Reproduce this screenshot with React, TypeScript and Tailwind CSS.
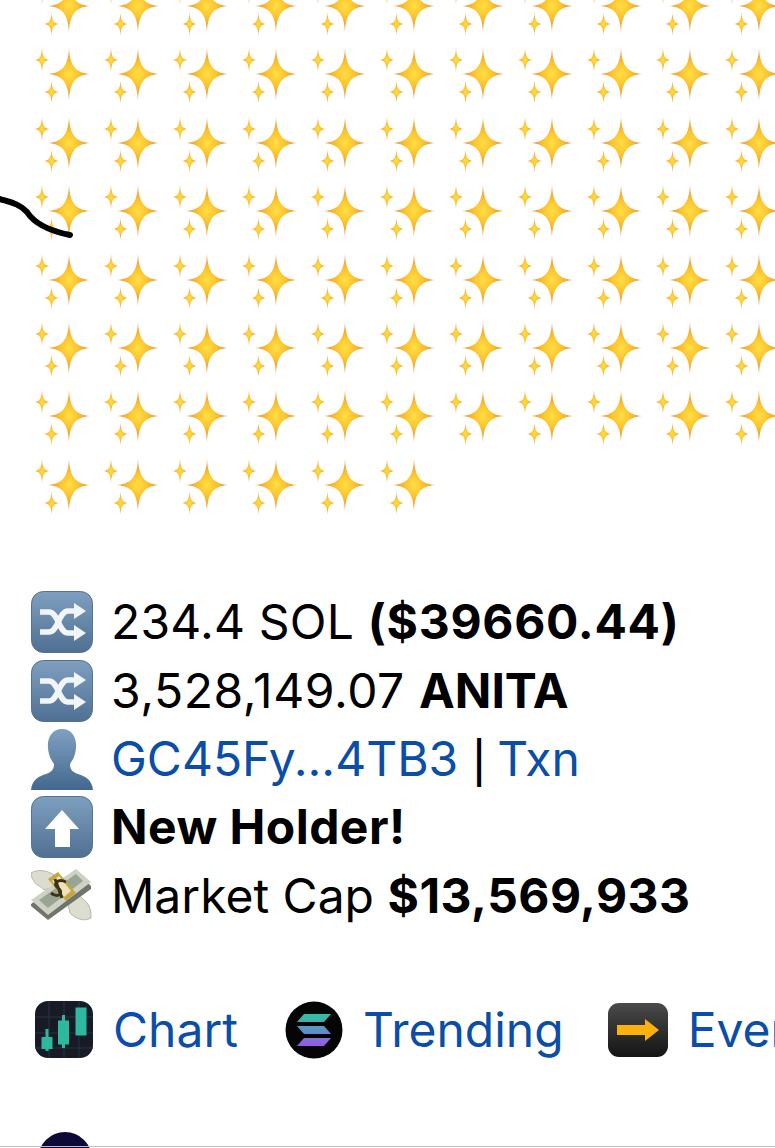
import React from "react";

function star(cx: number, cy: number, rx: number, ry: number) {
  const a = 0.04;
  const b = 0.32;
  return [
    `M${cx} ${cy - ry}`,
    `C${cx + a * rx} ${cy - b * ry} ${cx + b * rx} ${cy - a * ry} ${cx + rx} ${cy}`,
    `C${cx + b * rx} ${cy + a * ry} ${cx + a * rx} ${cy + b * ry} ${cx} ${cy + ry}`,
    `C${cx - a * rx} ${cy + b * ry} ${cx - b * rx} ${cy + a * ry} ${cx - rx} ${cy}`,
    `C${cx - b * rx} ${cy - a * ry} ${cx - a * rx} ${cy - b * ry} ${cx} ${cy - ry}Z`,
  ].join(" ");
}

const bigStar = star(35, 27, 21, 26);
const smallA = star(8, 13, 7.5, 12);
const smallB = star(17.5, 45, 7.5, 11.5);

function Sparkles() {
  return (
    <svg viewBox="0 0 60 60" className="w-[60px] h-[60px] block blur-[0.4px]">
      <path fill="url(#spk)" d={bigStar} />
      <path fill="url(#spk)" d={smallA} />
      <path fill="url(#spk)" d={smallB} />
    </svg>
  );
}

function Shuffle() {
  return (
    <svg viewBox="0 0 62 62" className="w-[62px] h-[62px] shrink-0">
      <rect x="0.5" y="0.5" width="61" height="61" rx="12" fill="url(#blueTile)" stroke="#54718f" />
      <g fill="none" stroke="#f2f5f8" strokeWidth="5.5">
        <path d="M9 21 H18 C27 21 28 42 37 42 H44" />
        <path d="M9 41 H18 C27 41 28 20 37 20 H44" />
      </g>
      <path fill="#f2f5f8" d="M43 12 L55 20 L43 28Z M43 34 L55 42 L43 50Z" />
    </svg>
  );
}

function Person() {
  return (
    <svg viewBox="0 0 62 62" className="w-[62px] h-[62px] shrink-0">
      <defs>
        <linearGradient id="personG" x1="0" y1="0" x2="0" y2="1">
          <stop offset="0%" stopColor="#7fa0c2" />
          <stop offset="100%" stopColor="#43688d" />
        </linearGradient>
      </defs>
      <path fill="url(#personG)" d="M31 1 C41 1 46 10 45 20 C44.500 28 41 33 39 36 C39 41 41 44 47 46 C55 48.500 61 52 62 62 H0 C1 52 7 48.500 15 46 C21 44 23 41 23 36 C21 33 17.500 28 17 20 C16 10 21 1 31 1Z" />
    </svg>
  );
}

function UpArrow() {
  return (
    <svg viewBox="0 0 62 62" className="w-[62px] h-[62px] shrink-0">
      <rect x="0.5" y="0.5" width="61" height="61" rx="12" fill="url(#blueTile)" stroke="#54718f" />
      <path fill="#ffffff" d="M31 14 L48 33 H39 V51 H24 V33 H14Z" />
    </svg>
  );
}

function MoneyWings() {
  return (
    <svg viewBox="2 0 62 56" className="w-[62px] h-[56px] shrink-0 -mt-[4px] blur-[0.3px]">
      <g fill="#dcdccf" stroke="#a9aa9a" strokeWidth="0.8">
        <path d="M2 7 C8 3 18 4 25 9 L27 20 L15 24 C12 20 6 19 5 15 C3 13 2 10 2 7Z" />
        <path d="M62 52 C55 56 47 53 41 47 L38 34 L50 29 C53 33 58 35 60 40 C62 44 62 48 62 52Z" />
      </g>
      <path fill="#6f7568" d="M2 38 L47 6 L62 20 L62 23 L19 54 L2 40Z" />
      <path fill="#cdd2c4" d="M2 34 L47 3 L62 16 L19 49 Z" />
      <path fill="#98a592" d="M10 34 L47 8 L54 15 L19 42 Z" />
      <path fill="#c7a63f" d="M19 13 L29 6 L47 27 L37 35 Z" />
      <path fill="#ece3bb" d="M23 15 L30 10 L42 25 L35 31 Z" />
      <path fill="none" stroke="#3d3214" strokeWidth="3" d="M37 16 C29 12 23 18 29 22 C35 26 30 33 22 27 M26 13 L33 32" />
    </svg>
  );
}

function ChartIcon() {
  return (
    <svg viewBox="0 0 58 58" className="w-[58px] h-[58px] shrink-0 blur-[0.3px]">
      <rect width="58" height="57" rx="13" fill="#161b26" />
      <g stroke="#2a3340" strokeWidth="1">
        <path d="M0 16 H58 M0 32 H58 M0 47 H58 M14 0 V57 M29 0 V57 M44 0 V57" />
      </g>
      <g fill="#2fb8a0">
        <rect x="6.500" y="36" width="11" height="12" />
        <rect x="10.500" y="28" width="3" height="22" />
        <rect x="23" y="19.500" width="11" height="24" />
        <rect x="27" y="14" width="3" height="33" />
        <rect x="40.500" y="6.500" width="11" height="28" />
      </g>
    </svg>
  );
}

function SolanaIcon() {
  return (
    <svg viewBox="0 0 58 58" className="w-[58px] h-[58px] shrink-0 blur-[0.3px]">
      <defs>
        <linearGradient id="solG" x1="0" y1="0" x2="0" y2="1">
          <stop offset="0%" stopColor="#2fc2a0" />
          <stop offset="50%" stopColor="#5b93c4" />
          <stop offset="100%" stopColor="#9a55e8" />
        </linearGradient>
      </defs>
      <circle cx="29" cy="29" r="28.500" fill="#050505" />
      <path fill="url(#solG)" d="M19 13 H46 L39 21 H12Z M12 25 H39 L46 33 H19Z M19 37 H46 L39 45 H12Z" />
    </svg>
  );
}

function ArrowIcon() {
  return (
    <svg viewBox="0 0 60 54" className="w-[60px] h-[54px] shrink-0 blur-[0.3px]">
      <defs>
        <linearGradient id="arrTile" x1="0" y1="0" x2="0" y2="1">
          <stop offset="0%" stopColor="#4a4a4a" />
          <stop offset="100%" stopColor="#141414" />
        </linearGradient>
      </defs>
      <rect width="60" height="54" rx="11" fill="url(#arrTile)" />
      <path fill="#fbb00f" d="M9 22 H37 V16 L51 27 L37 38 V32 H9Z" />
    </svg>
  );
}

function Row({ icon, children }: { icon: React.ReactNode; children: React.ReactNode }) {
  return (
    <div className="flex items-center h-[68.4px] whitespace-nowrap">
      <div className="w-[80px] shrink-0 flex items-center">{icon}</div>
      <div>{children}</div>
    </div>
  );
}

export default function App() {
  const counts = [11, 11, 11, 11, 11, 11, 11, 6];
  return (
    <div
      className="relative w-[775px] h-[1148px] overflow-hidden bg-white text-black text-[48px] leading-none"
      style={{ fontFamily: "Inter, 'Liberation Sans', sans-serif" }}
    >
      <svg width="0" height="0" className="absolute">
        <defs>
          <radialGradient id="spk" cx="50%" cy="50%" r="50%">
            <stop offset="0%" stopColor="#ffdf45" />
            <stop offset="40%" stopColor="#fdc52f" />
            <stop offset="100%" stopColor="#ee8a30" />
          </radialGradient>
          <linearGradient id="blueTile" x1="0" y1="0" x2="0" y2="1">
            <stop offset="0%" stopColor="#7e9fc0" />
            <stop offset="100%" stopColor="#4f7092" />
          </linearGradient>
        </defs>
      </svg>

      <div className="-mt-[21px] pl-[34px] w-[840px] flex flex-col">
        {counts.map((n, r) => (
          <div key={r} className="flex h-[68.4px]">
            {Array.from({ length: n }).map((_, c) => (
              <div key={c} className="w-[69px] shrink-0">
                <Sparkles />
              </div>
            ))}
          </div>
        ))}
      </div>

      <div className="mt-[62px] pl-[31px] flex flex-col">
        <Row icon={<Shuffle />}>
          <span className="tracking-[0.2px]">234.4 SOL </span>
          <b className="font-bold tracking-[0.7px]">($39660.44)</b>
        </Row>
        <Row icon={<Shuffle />}>
          <span className="tracking-[0.6px]">3,528,149.07 </span>
          <b className="font-bold">ANITA</b>
        </Row>
        <Row icon={<Person />}>
          <span className="text-[#0a4ea8]">GC45Fy...4TB3</span>
          <span className="text-[41px] font-medium ml-[3px] align-[-1px]"> | </span>
          <span className="text-[#0a4ea8]">Txn</span>
        </Row>
        <Row icon={<UpArrow />}>
          <b className="font-bold tracking-[0.45px]">New Holder!</b>
        </Row>
        <Row icon={<MoneyWings />}>
          Market Cap <b className="font-bold tracking-[0.45px]">$13,569,933</b>
        </Row>
      </div>

      <div className="mt-[71px] pl-[35px] flex items-center whitespace-nowrap text-[#0a4ea8]">
        <ChartIcon />
        <span className="ml-[20px]">Chart</span>
        <div className="ml-[47px]"><SolanaIcon /></div>
        <span className="ml-[20px]">Trending</span>
        <div className="ml-[44px]"><ArrowIcon /></div>
        <span className="ml-[20px]">Events</span>
      </div>

      <div className="mt-[73px] ml-[38px] w-[54px] h-[54px] rounded-full bg-[#0d0a3a]" />

      <div className="absolute left-0 right-0 bottom-[1px] h-[1px] bg-[#bdbdbd]" />

      <svg className="absolute left-0 top-[190px]" width="80" height="54" viewBox="0 0 80 54" fill="none">
        <path d="M0 9 C10 12 20 14 27 22 C34 33 50 41 70 45" stroke="#000" strokeWidth="6" strokeLinecap="round" />
      </svg>
    </div>
  );
}
